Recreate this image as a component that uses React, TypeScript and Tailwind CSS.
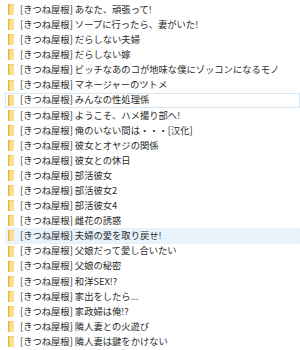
const titles = [
  'あなた、頑張って!',
  'ソープに行ったら、妻がいた!',
  'だらしない夫婦',
  'だらしない嫁',
  'ビッチなあのコが地味な僕にゾッコンになるモノ',
  'マネージャーのツトメ',
  'みんなの性処理係',
  'ようこそ、ハメ撮り部へ!',
  '俺のいない間は・・・[汉化]',
  '彼女とオヤジの関係',
  '彼女との休日',
  '部活彼女',
  '部活彼女2',
  '部活彼女4',
  '雌花の誘惑',
  '夫婦の愛を取り戻せ!',
  '父娘だって愛し合いたい',
  '父娘の秘密',
  '和洋SEX!?',
  '家出をしたら...',
  '家政婦は俺!?',
  '隣人妻との火遊び',
  '隣人妻は鍵をかけない',
];

const FOCUSED = 6;
const HOVERED = 15;

function FolderIcon() {
  return (
    <svg width="6" height="11" viewBox="0 0 6 11" className="shrink-0">
      <rect x="0" y="0" width="6" height="11" fill="#f5cf62" />
      <rect x="0" y="0" width="1.5" height="11" fill="#e3b447" />
      <rect x="1.5" y="1" width="4.5" height="10" fill="#fbe08f" />
    </svg>
  );
}

export default function App() {
  return (
    <div className="w-[300px] h-[350px] overflow-hidden bg-white pt-[2px] font-['Noto_Sans_CJK_JP','Noto_Sans',sans-serif]">
      {titles.map((title, i) => (
        <div
          key={title}
          className={
            'ml-[5px] h-[15.1px] flex items-center gap-[6px] pl-[2px] border whitespace-nowrap ' +
            (i === FOCUSED
              ? 'border-[#d5e6f5]'
              : i === HOVERED
                ? 'border-[#e5f1fb] bg-[#e8f3fc]'
                : 'border-transparent')
          }
        >
          <FolderIcon />
          <span className="text-[9.3px] leading-none text-[#2b2b2b]">
            [きつね屋根] {title}
          </span>
        </div>
      ))}
    </div>
  );
}
